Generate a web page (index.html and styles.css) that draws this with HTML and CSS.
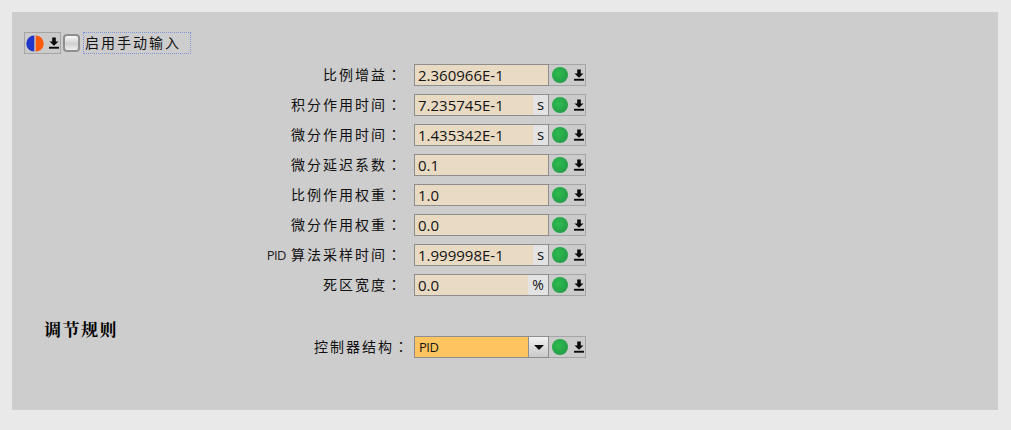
FILE: index.html
```html
<!DOCTYPE html>
<html lang="zh">
<head>
<meta charset="utf-8">
<title>调节规则</title>
<link rel="stylesheet" href="styles.css">
</head>
<body>
<svg class="defs" width="0" height="0" aria-hidden="true">
  <defs>
    <symbol id="dl" viewBox="0 0 10 12">
      <path d="M3.200 0.500h3.600v4h2.700L5 8.800 0.500 4.500h2.700z" fill="#0a0a0a"/>
      <rect x="0" y="9.800" width="10" height="1.900" fill="#0a0a0a"/>
    </symbol>
    <radialGradient id="gr" cx="0.4" cy="0.4" r="0.65">
      <stop offset="0" stop-color="#2cbb4e"/>
      <stop offset="1" stop-color="#259c48"/>
    </radialGradient>
    <symbol id="dot" viewBox="0 0 16 16">
      <circle cx="8" cy="8" r="8" fill="url(#gr)"/>
    </symbol>
  </defs>
</svg>
<main class="panel">
  <div class="manual">
    <div class="btns first">
      <svg class="half" viewBox="0 0 18 17" aria-hidden="true">
        <path d="M8.300 0.500a8 8 0 0 0 0 16z" fill="#2136c9"/>
        <path d="M9.700 0.500a8 8 0 0 1 0 16z" fill="#fb5a0c"/>
      </svg>
      <svg class="dl" aria-hidden="true"><use href="#dl"/></svg>
    </div>
    <span class="check"></span>
    <span class="manual-label">启用手动输入</span>
  </div>

  <div class="rows">
    <div class="row">
      <span class="label">比例增益<span class="colon">：</span></span>
      <div class="field"><span class="val">2.360966E-1</span></div>
      <div class="btns"><svg class="dot" aria-hidden="true"><use href="#dot"/></svg><svg class="dl" aria-hidden="true"><use href="#dl"/></svg></div>
    </div>
    <div class="row">
      <span class="label">积分作用时间<span class="colon">：</span></span>
      <div class="field"><span class="val">7.235745E-1</span><span class="unit">s</span></div>
      <div class="btns"><svg class="dot" aria-hidden="true"><use href="#dot"/></svg><svg class="dl" aria-hidden="true"><use href="#dl"/></svg></div>
    </div>
    <div class="row">
      <span class="label">微分作用时间<span class="colon">：</span></span>
      <div class="field"><span class="val">1.435342E-1</span><span class="unit">s</span></div>
      <div class="btns"><svg class="dot" aria-hidden="true"><use href="#dot"/></svg><svg class="dl" aria-hidden="true"><use href="#dl"/></svg></div>
    </div>
    <div class="row">
      <span class="label">微分延迟系数<span class="colon">：</span></span>
      <div class="field"><span class="val">0.1</span></div>
      <div class="btns"><svg class="dot" aria-hidden="true"><use href="#dot"/></svg><svg class="dl" aria-hidden="true"><use href="#dl"/></svg></div>
    </div>
    <div class="row">
      <span class="label">比例作用权重<span class="colon">：</span></span>
      <div class="field"><span class="val">1.0</span></div>
      <div class="btns"><svg class="dot" aria-hidden="true"><use href="#dot"/></svg><svg class="dl" aria-hidden="true"><use href="#dl"/></svg></div>
    </div>
    <div class="row">
      <span class="label">微分作用权重<span class="colon">：</span></span>
      <div class="field"><span class="val">0.0</span></div>
      <div class="btns"><svg class="dot" aria-hidden="true"><use href="#dot"/></svg><svg class="dl" aria-hidden="true"><use href="#dl"/></svg></div>
    </div>
    <div class="row">
      <span class="label"><span class="latin">PID</span> 算法采样时间<span class="colon">：</span></span>
      <div class="field"><span class="val">1.999998E-1</span><span class="unit">s</span></div>
      <div class="btns"><svg class="dot" aria-hidden="true"><use href="#dot"/></svg><svg class="dl" aria-hidden="true"><use href="#dl"/></svg></div>
    </div>
    <div class="row">
      <span class="label">死区宽度<span class="colon">：</span></span>
      <div class="field"><span class="val">0.0</span><span class="unit pct">%</span></div>
      <div class="btns"><svg class="dot" aria-hidden="true"><use href="#dot"/></svg><svg class="dl" aria-hidden="true"><use href="#dl"/></svg></div>
    </div>
  </div>

  <section class="rule">
    <h2 class="rule-title">调节规则</h2>
    <div class="row">
      <span class="label wide">控制器结构<span class="colon">：</span></span>
      <div class="field select"><span class="val">PID</span><span class="arrow"><i></i></span></div>
      <div class="btns"><svg class="dot" aria-hidden="true"><use href="#dot"/></svg><svg class="dl" aria-hidden="true"><use href="#dl"/></svg></div>
    </div>
  </section>
</main>
</body>
</html>
```
FILE: styles.css
```css
* { box-sizing: border-box; }
html, body { margin: 0; height: 100%; }
body {
  background: #e9e9e9;
  padding: 12px 13px 20px 12px;
  font-family: "Noto Sans CJK JP", "Open Sans", sans-serif;
  color: #111;
  overflow: hidden;
}
.defs { position: absolute; }
.panel {
  height: 398px;
  background: #cdcdcd;
  padding: 20px 0 0 12px;
}
.manual {
  display: flex;
  align-items: center;
  height: 22px;
}
.btns {
  width: 37px;
  height: 22px;
  flex: none;
  display: flex;
  align-items: center;
  gap: 6px;
  padding-left: 3px;
  border: 1px solid #a5a5a5;
  border-left: 0;
  background: #cbcbcb;
}
.btns.first {
  border-left: 1px solid #a5a5a5;
  width: 37px;
  padding-left: 1px;
  gap: 5px;
}
.half { width: 18px; height: 17px; flex: none; }
.dl { width: 10px; height: 12px; flex: none; }
.dot { width: 16px; height: 16px; flex: none; }
.check {
  width: 17px;
  height: 18px;
  margin-left: 2px;
  flex: none;
  border: 2px solid #8f8f8f;
  border-radius: 4px;
  background: linear-gradient(#f7f7f7, #cfcfcf 55%, #efefef);
}
.manual-label {
  margin-left: 3px;
  width: 108px;
  height: 22px;
  padding-left: 1px;
  font-size: 14px;
  line-height: 18px;
  letter-spacing: 2px;
  border: 1px dotted #7f95d6;
  white-space: nowrap;
  overflow: hidden;
}
.rows {
  display: flex;
  flex-direction: column;
  gap: 8px;
  margin-top: 10px;
}
.row {
  display: flex;
  align-items: center;
  height: 22px;
}
.label {
  width: 390px;
  padding-right: 11px;
  flex: none;
  text-align: right;
  font-size: 14px;
  letter-spacing: 2px;
  line-height: 20px;
  height: 22px;
  white-space: nowrap;
}
.colon { font-feature-settings: "locl" 0; }
.latin { font-family: "Open Sans", sans-serif; font-size: 13px; letter-spacing: -0.6px; color: #222; }
.field {
  width: 135px;
  height: 22px;
  flex: none;
  display: flex;
  border: 1px solid #8e8e8e;
  background: #e8dac3;
  font-family: "Open Sans", sans-serif;
  font-size: 15px;
  line-height: 20px;
  color: #141414;
}
.val { flex: 1; padding-left: 3px; white-space: nowrap; overflow: hidden; }
.unit {
  width: 15px;
  flex: none;
  background: #e3e3e3;
  text-align: center;
  font-size: 15px;
  line-height: 19px;
}
.unit.pct { width: 20px; font-size: 14px; }
.rule {
  display: flex;
  margin-top: 18px;
  position: relative;
  padding-top: 22px;
}
.rule-title {
  position: absolute;
  left: 20px;
  top: 4px;
  margin: 0;
  font-family: "Noto Serif CJK SC", "Liberation Serif", "Noto Sans CJK SC", serif;
  font-size: 17px;
  font-weight: 700;
  letter-spacing: 1.500px;
  line-height: 22px;
  color: #000;
}
.label.wide { padding-right: 4px; }
.select { background: #fec45f; font-size: 13px; }
.select .val { padding-left: 4px; letter-spacing: -0.5px; }
.arrow {
  width: 20px;
  flex: none;
  display: flex;
  align-items: center;
  justify-content: center;
  background: linear-gradient(#f2f2f2, #c9c9c9);
  border-left: 1px solid #8e8e8e;
}
.arrow i {
  width: 0;
  height: 0;
  border: 5px solid transparent;
  border-top: 5px solid #0c0c0c;
  border-bottom: 0;
}
```
